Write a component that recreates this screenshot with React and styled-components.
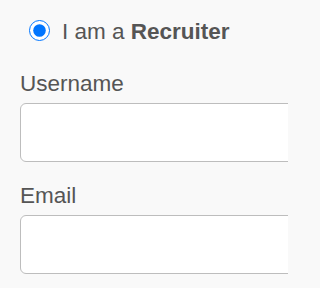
import React from 'react';
import styled, { createGlobalStyle } from 'styled-components';

const GlobalStyle = createGlobalStyle`
  html, body {
    margin: 0;
    padding: 0;
    overflow: hidden;
    background: #f9f9f9;
  }
`;

const Form = styled.form`
  width: 288px;
  box-sizing: border-box;
  overflow: hidden;
  padding: 19px 0 0 20px;
  font-family: 'Liberation Sans', Arial, sans-serif;
  color: #555;
`;

const RoleRow = styled.label`
  display: flex;
  align-items: center;
  gap: 12px;
  height: 26px;
  margin: 0 0 26px 9px;
  font-size: 22.5px;
  line-height: 26px;
`;

const Radio = styled.input`
  width: 21px;
  height: 21px;
  margin: 0 0 4px 0;
  accent-color: #0075ff;
`;

const Field = styled.div`
  margin-bottom: 21px;
`;

const FieldLabel = styled.label`
  display: block;
  font-size: 22.5px;
  line-height: 26px;
  margin-bottom: 6px;
`;

const TextInput = styled.input`
  display: block;
  box-sizing: border-box;
  width: calc(100% + 12px);
  height: 59px;
  padding: 0 12px;
  border: 1.5px solid #bdbdbd;
  border-radius: 6px;
  background: #fff;
  font-family: inherit;
  font-size: 22.5px;
  color: #555;
  outline: none;
`;

const App = () => {
  return (
    <>
      <GlobalStyle />
      <Form>
        <RoleRow>
          <Radio type="radio" name="role" value="recruiter" defaultChecked />
          <span>
            I am a <b>Recruiter</b>
          </span>
        </RoleRow>
        <Field>
          <FieldLabel htmlFor="username">Username</FieldLabel>
          <TextInput type="text" id="username" name="username" />
        </Field>
        <Field>
          <FieldLabel htmlFor="email">Email</FieldLabel>
          <TextInput type="email" id="email" name="email" />
        </Field>
      </Form>
    </>
  );
};

export default App;
